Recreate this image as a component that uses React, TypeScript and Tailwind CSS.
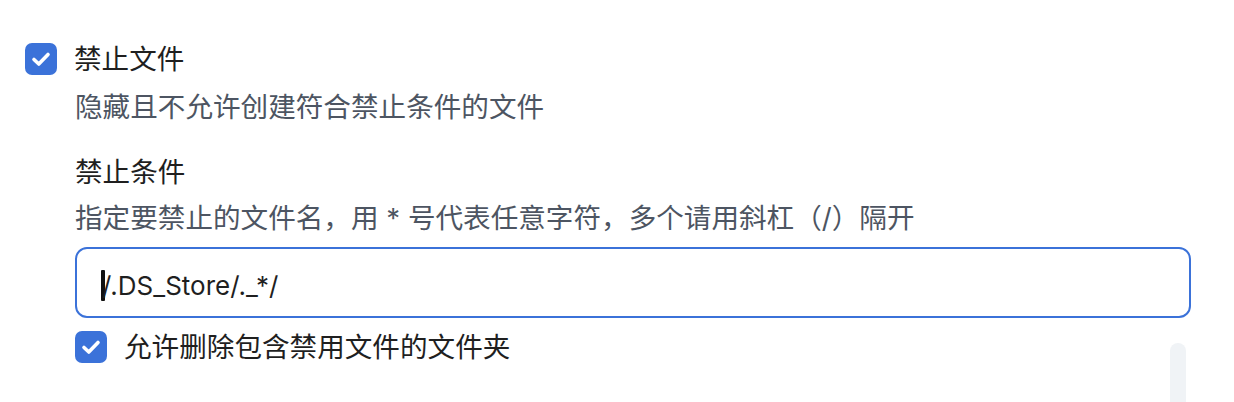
import React from "react";

// Blue filled checkbox with a white tick
function Check({ className = "" }: { className?: string }) {
  return (
    <div className={`flex items-center justify-center w-[32px] h-[32px] rounded-[7px] bg-[#3b72d9] shrink-0 ${className}`}>
      <svg width="22" height="22" viewBox="0 0 22 22" fill="none" className="block">
        <path d="M4 11.5 L8.8 16 L18 6.5" stroke="white" strokeWidth="3.6" strokeLinecap="round" strokeLinejoin="round" />
      </svg>
    </div>
  );
}

export default function App() {
  const font = { fontFamily: 'Inter, "Noto Sans CJK SC", sans-serif' };
  return (
    <div className="w-[1234px] h-[402px] bg-white relative overflow-hidden" style={font}>
      <div className="pl-[25px] pt-[43px]">
        {/* main toggle */}
        <div className="flex items-center gap-[17px] h-[32px]">
          <Check />
          <div className="text-[27.6px] leading-[32px] text-[#1f1f1f]">禁止文件</div>
        </div>

        <div className="pl-[50px]">
          <div className="mt-[12px] text-[27.6px] leading-[40px] text-[#4d5562]">隐藏且不允许创建符合禁止条件的文件</div>

          <div className="mt-[25px] text-[27.6px] leading-[40px] text-[#1f1f1f]">禁止条件</div>
          <div className="mt-[6px] text-[27.6px] leading-[40px] text-[#4d5562]">
            指定要禁止的文件名，用 * 号代表任意字符，多个请用斜杠（/）隔开
          </div>

          <div className="mt-[9px] w-[1116px] h-[71px] border-2 border-[#3b72d9] rounded-[12px] flex items-center pl-[24px] pt-[6px]">
            <span className="inline-block w-[4px] h-[31px] bg-[#111] rounded-[1px] -mr-[3px]" />
            <span className="text-[26px] text-[#1f1f1f]" style={{ fontFamily: "Inter, sans-serif" }}>/.DS_Store/._*/</span>
          </div>

          <div className="mt-[13px] flex items-center gap-[17px] h-[32px]">
            <Check />
            <div className="text-[27.6px] leading-[32px] text-[#1f1f1f]">允许删除包含禁用文件的文件夹</div>
          </div>
        </div>
      </div>

      {/* scrollbar thumb peeking in */}
      <div className="absolute left-[1170px] top-[343px] w-[16px] h-[80px] rounded-full bg-[#f0f3f6]" />
    </div>
  );
}
